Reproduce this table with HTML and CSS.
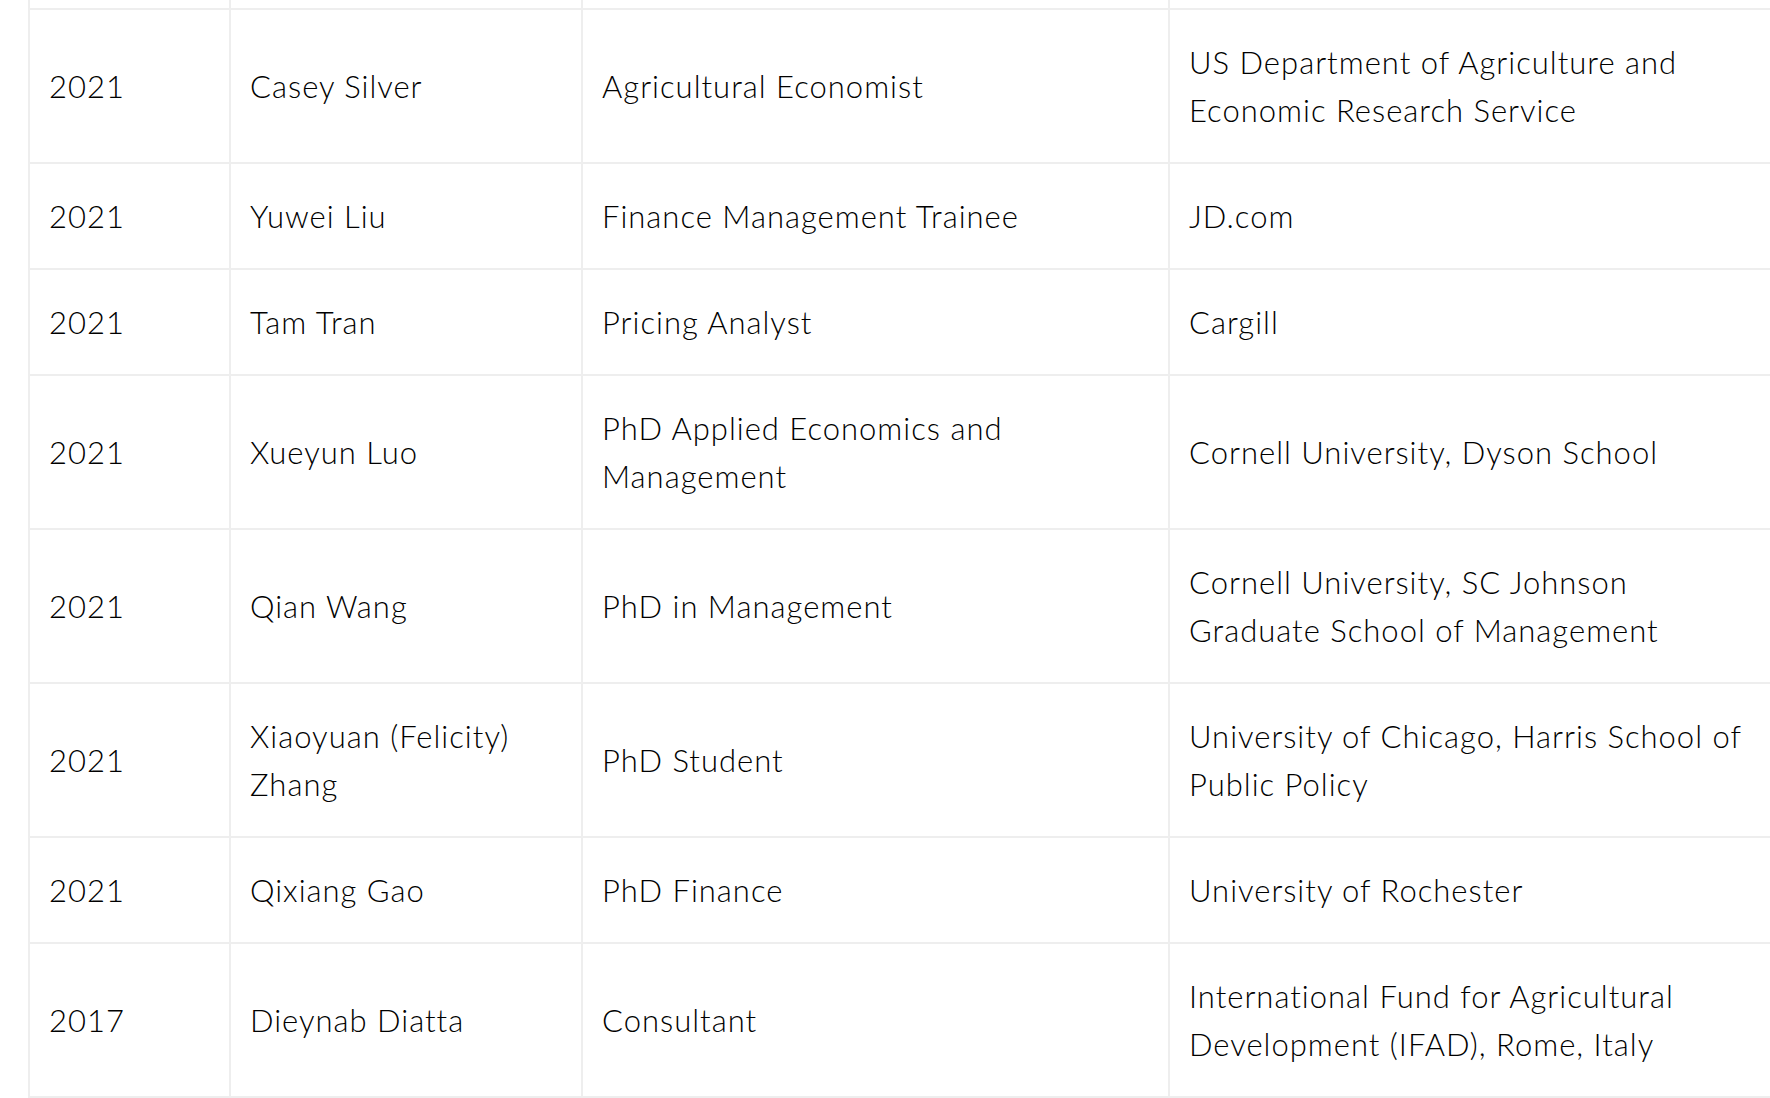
FILE: index.html
```html
<!DOCTYPE html>
<html lang="en">
<head>
<meta charset="utf-8">
<title>Alumni placements</title>
<link rel="stylesheet" href="styles.css">
</head>
<body>
<div class="page">
  <table class="placements">
    <colgroup>
      <col class="c-year">
      <col class="c-name">
      <col class="c-role">
      <col class="c-org">
    </colgroup>
    <tbody>
      <tr class="cut"><td></td><td></td><td></td><td></td></tr>
      <tr><td>2021</td><td>Casey Silver</td><td>Agricultural Economist</td><td>US Department of Agriculture and Economic Research Service</td></tr>
      <tr><td>2021</td><td>Yuwei Liu</td><td>Finance Management Trainee</td><td>JD.com</td></tr>
      <tr><td>2021</td><td>Tam Tran</td><td>Pricing Analyst</td><td>Cargill</td></tr>
      <tr><td>2021</td><td>Xueyun Luo</td><td>PhD Applied Economics and Management</td><td>Cornell University, Dyson School</td></tr>
      <tr><td>2021</td><td>Qian Wang</td><td>PhD in Management</td><td>Cornell University, SC Johnson Graduate School of Management</td></tr>
      <tr><td>2021</td><td>Xiaoyuan (Felicity) Zhang</td><td>PhD Student</td><td>University of Chicago, Harris School of Public Policy</td></tr>
      <tr><td>2021</td><td>Qixiang Gao</td><td>PhD Finance</td><td>University of Rochester</td></tr>
      <tr><td>2017</td><td>Dieynab Diatta</td><td>Consultant</td><td>International Fund for Agricultural Development (IFAD), Rome, Italy</td></tr>
    </tbody>
  </table>
</div>
</body>
</html>
```
FILE: styles.css
```css
html, body {
  margin: 0;
  padding: 0;
  background: #fff;
  overflow: hidden;
}

.page {
  padding-left: 28px;
  width: 1900px;
}

.placements {
  border-collapse: separate;
  border-spacing: 0;
  table-layout: fixed;
  width: 1792px;
  border-left: 2px solid #eeeeee;
  font-family: "Lato", "Liberation Sans", sans-serif;
  font-weight: 300;
  font-size: 31px;
  line-height: 48px;
  letter-spacing: 1px;
  color: #000;
}

.c-year { width: 201px; }
.c-name { width: 352px; }
.c-role { width: 587px; }
.c-org  { width: 650px; }

.placements td {
  box-sizing: border-box;
  padding: 28px 19px;
  vertical-align: middle;
  text-align: left;
  border-right: 2px solid #eeeeee;
  border-bottom: 2px solid #eeeeee;
}

.placements td:last-child {
  padding-right: 60px;
}

.placements .cut td {
  height: 10px;
  padding: 0;
}
```
